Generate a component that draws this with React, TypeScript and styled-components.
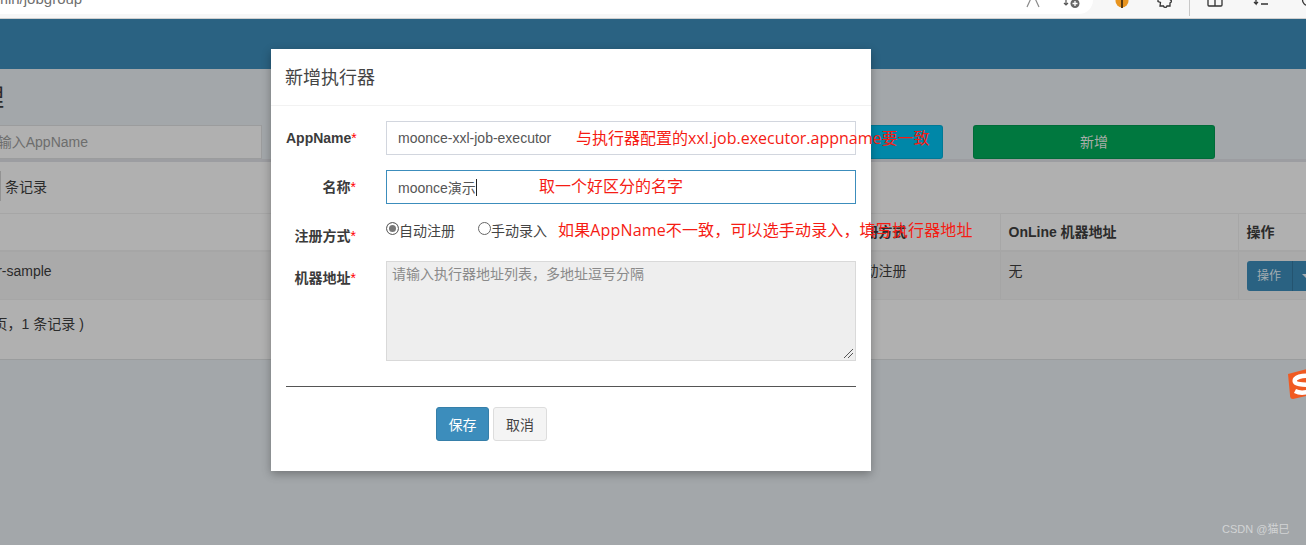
import styled, { createGlobalStyle } from "styled-components";

const GlobalStyle = createGlobalStyle`
  html, body {
    margin: 0;
    padding: 0;
    height: 100%;
    overflow: hidden;
    background: #a3a7aa;
  }
  * {
    box-sizing: border-box;
  }
  body {
    font-family: "Liberation Sans", "Noto Sans CJK SC", sans-serif;
    font-size: 14px;
    color: #2b2b2b;
  }
`;

const Page = styled.div`
  position: relative;
  width: 1306px;
  height: 545px;
  overflow: hidden;
  background: #a3a7aa;
`;

const BrowserBar = styled.div`
  display: flex;
  height: 19px;
  background: #f7f7f7;
  border-bottom: 1px solid #cfcfcf;
  overflow: hidden;
`;

const Omnibox = styled.div`
  display: flex;
  flex: none;
  justify-content: space-between;
  width: 1093px;
  height: 14px;
  padding-right: 12px;
  background: #fff;
  border-bottom-right-radius: 14px;
  overflow: hidden;
`;

const UrlText = styled.span`
  margin: -11px 0 0 -208px;
  font-size: 15px;
  line-height: 20px;
  color: #6f6f6f;
  white-space: nowrap;
`;

const OmniIcons = styled.div`
  display: flex;
  gap: 22px;
  margin-top: -9px;
`;

const ToolIcons = styled.div`
  display: flex;
  flex: none;
  align-items: flex-start;
  margin-top: -9px;
  padding-left: 22px;
  gap: 28px;
`;

const ToolSeparator = styled.i`
  display: block;
  width: 1px;
  height: 16px;
  margin: 9px -12px 0 -12px;
  background: #c8c8c8;
`;

const TopHeader = styled.header`
  height: 50px;
  background: #2a6282;
`;

const Content = styled.main`
  display: flex;
  flex-direction: column;
`;

const PageTitle = styled.h1`
  margin: 17px 0 0 -116px;
  font-size: 24px;
  line-height: 24px;
  font-weight: 400;
  color: #2b2b2b;
  white-space: nowrap;
`;

const FilterRow = styled.div`
  display: flex;
  height: 34px;
  margin: 15px 0 0 -80px;
`;

const SearchInput = styled.div`
  flex: none;
  width: 342px;
  height: 34px;
  padding: 0 173px 0 12px;
  background: #b0b0b0;
  border: 1px solid #9b9c9d;
  font-size: 14px;
  line-height: 32px;
  color: #6d6d6d;
  text-align: right;
  white-space: nowrap;
`;

const FilterButton = styled.div<{ $bg: string; $width: number; $left: number }>`
  flex: none;
  width: ${(p) => p.$width}px;
  height: 34px;
  margin-left: ${(p) => p.$left}px;
  background: ${(p) => p.$bg};
  border: 1px solid rgba(0, 0, 0, 0.1);
  border-radius: 3px;
  font-size: 14px;
  line-height: 32px;
  color: #a9ada9;
  text-align: center;
`;

const ListBox = styled.section`
  height: 201px;
  background: #b0b0b0;
  border-top: 3px solid #9c9da1;
  border-bottom: 1px solid #9a9c9d;
`;

const LengthRow = styled.div`
  display: flex;
  align-items: center;
  height: 51px;
  padding-bottom: 3px;
`;

const LengthSelect = styled.i`
  display: block;
  width: 1px;
  height: 30px;
  margin-right: 4px;
  background: #939393;
`;

const RecordsTable = styled.table`
  width: 1411px;
  margin-left: -105px;
  table-layout: fixed;
  border-collapse: collapse;
  font-size: 14px;
  line-height: 20px;
  color: #2b2b2b;
`;

const HeadCell = styled.th`
  height: 37px;
  padding: 0 8px;
  text-align: left;
  font-weight: 700;
  white-space: nowrap;
  vertical-align: middle;
  border-top: 1px solid #a6a6a6;
  border-right: 1px solid #a7a7a7;
  border-bottom: 2px solid #a6a6a6;
`;

const BodyCell = styled.td`
  height: 49px;
  padding: 9px 8px 0;
  vertical-align: top;
  white-space: nowrap;
  background: #aaaaaa;
  border-right: 1px solid #a5a5a5;
  border-bottom: 1px solid #a6a6a6;
`;

const ActionCell = styled(BodyCell)`
  padding: 9px 0 0 8px;
`;

const ActionGroup = styled.div`
  display: flex;
  width: 80px;
  height: 30px;
  background: #2a6282;
  border-radius: 3px;
  font-size: 12px;
  line-height: 30px;
  color: #a4acb1;
`;

const ActionLabel = styled.span`
  width: 46px;
  text-align: center;
  border-right: 1px solid #245470;
`;

const Caret = styled.i`
  display: block;
  width: 0;
  height: 0;
  margin: 13px 0 0 9px;
  border-top: 4px solid #a4acb1;
  border-left: 4px solid transparent;
  border-right: 4px solid transparent;
`;

const PageInfo = styled.div`
  margin: 14px 0 0 -106px;
  line-height: 20px;
  white-space: nowrap;
`;

const Modal = styled.div`
  position: absolute;
  left: 271px;
  top: 49px;
  width: 600px;
  height: 422px;
  background: #fff;
  box-shadow: 0 3px 9px rgba(0, 0, 0, 0.3);
  color: #333;
`;

const ModalHeader = styled.div`
  height: 57px;
  padding: 16px 14px;
  border-bottom: 1px solid #f2f2f2;
  font-size: 18px;
  line-height: 26px;
  color: #444;
`;

const ModalForm = styled.form`
  display: flex;
  flex-direction: column;
  padding: 15px 15px 0;
`;

const FieldRow = styled.div<{ $height: number }>`
  display: grid;
  grid-template-columns: 70px 470px;
  column-gap: 30px;
  height: ${(p) => p.$height}px;
`;

const FieldLabel = styled.label`
  padding-top: 7px;
  font-weight: 700;
  font-size: 14px;
  line-height: 20px;
  color: #3b3b3b;
  text-align: right;
  white-space: nowrap;
`;

const Required = styled.span`
  color: #f00;
  font-weight: 400;
`;

const TextField = styled.div<{ $focused?: boolean }>`
  display: flex;
  align-items: center;
  height: 34px;
  padding: 0 11px;
  border: 1px solid ${(p) => (p.$focused ? "#3c8dbc" : "#d2d6de")};
  font-size: 14px;
  color: #555;
`;

const TextCaret = styled.i`
  display: block;
  width: 1px;
  height: 17px;
  background: #222;
`;

const RadioGroup = styled.div`
  display: flex;
  padding-top: 2px;
  font-size: 14px;
  line-height: 20px;
  color: #444;
`;

const RadioOption = styled.span<{ $width: number }>`
  display: flex;
  align-items: flex-start;
  width: ${(p) => p.$width}px;
`;

const RadioMark = styled.i<{ $checked?: boolean }>`
  display: block;
  flex: none;
  width: 13px;
  height: 13px;
  margin-top: 1px;
  border: 1px solid #666;
  border-radius: 50%;
  background: ${(p) => (p.$checked ? "#777" : "#fff")};
  box-shadow: inset 0 0 0 ${(p) => (p.$checked ? "2px" : "0")} #fff;
`;

const TextArea = styled.div`
  position: relative;
  height: 100px;
  padding: 5px;
  background: #eee;
  border: 1px solid #d9d9d9;
  font-size: 14px;
  line-height: 14px;
  color: #8a8a8a;
`;

const ResizeGrip = styled.svg`
  position: absolute;
  right: 1px;
  bottom: 1px;
`;

const Divider = styled.hr`
  width: 570px;
  height: 1px;
  margin: 25px 0 20px;
  border: 0;
  background: #555;
`;

const ButtonRow = styled.div`
  display: flex;
  gap: 4px;
  padding-left: 150px;
`;

const ModalButton = styled.button<{ $primary?: boolean }>`
  width: ${(p) => (p.$primary ? 53 : 54)}px;
  height: 34px;
  padding: 0;
  background: ${(p) => (p.$primary ? "#3c8dbc" : "#f4f4f4")};
  border: 1px solid ${(p) => (p.$primary ? "#367fa9" : "#ddd")};
  border-radius: 3px;
  font-family: inherit;
  font-size: 14px;
  color: ${(p) => (p.$primary ? "#fff" : "#444")};
`;

const Annotation = styled.span<{ $left: number; $top: number; $tracking?: number }>`
  position: absolute;
  left: ${(p) => p.$left}px;
  top: ${(p) => p.$top}px;
  font-family: "Open Sans", "Noto Sans CJK SC", sans-serif;
  font-size: 16px;
  line-height: 20px;
  letter-spacing: ${(p) => p.$tracking ?? 0}px;
  color: #f51c14;
  white-space: nowrap;
`;

const ImeBadge = styled.svg`
  position: absolute;
  left: 1286px;
  top: 368px;
`;

const Watermark = styled.span`
  position: absolute;
  left: 1222px;
  top: 522px;
  font-size: 11px;
  line-height: 14px;
  color: #d2d4d5;
  white-space: nowrap;
`;

const iconStroke = { fill: "none", stroke: "#333", strokeWidth: 1.3 };

function ReadAloudIcon() {
  return (
    <svg width="16" height="18" viewBox="0 0 16 18">
      <path d="M2 16 L8 3 L14 16" fill="none" stroke="#8a8a8a" strokeWidth="1.2" />
    </svg>
  );
}

function FavoriteIcon() {
  return (
    <svg width="18" height="18" viewBox="0 0 18 18">
      <path d="M3 6v8M1 12l2 2 2-2" fill="none" stroke="#555" strokeWidth="1.2" />
      <circle cx="12" cy="12.500" r="4.500" fill="#666" />
      <path d="M12 10v5M9.500 12.500h5" stroke="#fff" strokeWidth="1.3" />
    </svg>
  );
}

function ExtensionBadge() {
  return (
    <svg width="14" height="18" viewBox="0 0 14 18">
      <circle cx="7" cy="10" r="6.500" fill="#e8941f" />
      <path d="M7 9v8" stroke="#5a3a10" strokeWidth="2" />
    </svg>
  );
}

function PuzzleIcon() {
  return (
    <svg width="16" height="18" viewBox="0 0 16 18">
      <path d="M1 9v1.500l2.500 1L3 15h3.500a1.800 1.800 0 0 0 3.500 0h3v-3a1.800 1.800 0 0 0 0-3.500V6" {...iconStroke} />
    </svg>
  );
}

function SplitIcon() {
  return (
    <svg width="18" height="18" viewBox="0 0 18 18">
      <path d="M2 4v10c0 .600.400 1 1 1h12c.600 0 1-.400 1-1V4M9 4v11" {...iconStroke} />
    </svg>
  );
}

function QueueIcon() {
  return (
    <svg width="18" height="18" viewBox="0 0 18 18">
      <path d="M4 4v9l-2-2M4 13l2-2M9 13h7" {...iconStroke} />
    </svg>
  );
}

function CollectionIcon() {
  return (
    <svg width="18" height="18" viewBox="0 0 18 18">
      <circle cx="10" cy="9" r="5.500" {...iconStroke} />
      <path d="M10 7v4M8 9h4" {...iconStroke} />
    </svg>
  );
}

function SogouBadge() {
  return (
    <ImeBadge width="24" height="32" viewBox="0 0 24 32">
      <path d="M2 6 L21 1 Q25 1 25 3 L25 27 L7 31 Q4.500 31 4.200 29 Z" fill="#f05a22" />
      <path
        d="M24 8 C17 7 7 9 9 14 C11 18 20 15 24 18 M24 23 C19 25 13 25 9 23"
        fill="none"
        stroke="#fff"
        strokeWidth="4.500"
      />
    </ImeBadge>
  );
}

export default function App() {
  return (
    <Page>
      <GlobalStyle />
      <BrowserBar>
        <Omnibox>
          <UrlText>http://localhost:8080/xxl-job-admin/jobgroup</UrlText>
          <OmniIcons>
            <ReadAloudIcon />
            <FavoriteIcon />
          </OmniIcons>
        </Omnibox>
        <ToolIcons>
          <ExtensionBadge />
          <PuzzleIcon />
          <ToolSeparator />
          <SplitIcon />
          <QueueIcon />
          <CollectionIcon />
        </ToolIcons>
      </BrowserBar>
      <TopHeader />
      <Content>
        <PageTitle>执行器管理</PageTitle>
        <FilterRow>
          <SearchInput>请输入AppName</SearchInput>
          <FilterButton $bg="#0087a8" $width={100} $left={581} />
          <FilterButton $bg="#00783f" $width={242} $left={30}>
            新增
          </FilterButton>
        </FilterRow>
        <ListBox>
          <LengthRow>
            <LengthSelect />
            条记录
          </LengthRow>
          <RecordsTable>
            <colgroup>
              <col width="485" />
              <col width="462" />
              <col width="158" />
              <col width="238" />
              <col width="68" />
            </colgroup>
            <thead>
              <tr>
                <HeadCell>AppName</HeadCell>
                <HeadCell>名称</HeadCell>
                <HeadCell>注册方式</HeadCell>
                <HeadCell>OnLine 机器地址</HeadCell>
                <HeadCell>操作</HeadCell>
              </tr>
            </thead>
            <tbody>
              <tr>
                <BodyCell>xxl-job-executor-sample</BodyCell>
                <BodyCell>示例执行器</BodyCell>
                <BodyCell>自动注册</BodyCell>
                <BodyCell>无</BodyCell>
                <ActionCell>
                  <ActionGroup>
                    <ActionLabel>操作</ActionLabel>
                    <Caret />
                  </ActionGroup>
                </ActionCell>
              </tr>
            </tbody>
          </RecordsTable>
          <PageInfo>第 1 页 ( 总共 1 页，1 条记录 )</PageInfo>
        </ListBox>
      </Content>

      <Modal>
        <ModalHeader>新增执行器</ModalHeader>
        <ModalForm>
          <FieldRow $height={49}>
            <FieldLabel>
              AppName<Required>*</Required>
            </FieldLabel>
            <TextField>moonce-xxl-job-executor</TextField>
          </FieldRow>
          <FieldRow $height={49}>
            <FieldLabel>
              名称<Required>*</Required>
            </FieldLabel>
            <TextField $focused>
              moonce演示
              <TextCaret />
            </TextField>
          </FieldRow>
          <FieldRow $height={42}>
            <FieldLabel>
              注册方式<Required>*</Required>
            </FieldLabel>
            <RadioGroup>
              <RadioOption $width={92}>
                <RadioMark $checked />
                自动注册
              </RadioOption>
              <RadioOption $width={80}>
                <RadioMark />
                手动录入
              </RadioOption>
            </RadioGroup>
          </FieldRow>
          <FieldRow $height={100}>
            <FieldLabel>
              机器地址<Required>*</Required>
            </FieldLabel>
            <TextArea>
              请输入执行器地址列表，多地址逗号分隔
              <ResizeGrip width="11" height="11" viewBox="0 0 11 11">
                <path d="M1 10 L10 1 M5 10 L10 5" stroke="#555" strokeWidth="1" />
              </ResizeGrip>
            </TextArea>
          </FieldRow>
          <Divider />
          <ButtonRow>
            <ModalButton $primary type="button">
              保存
            </ModalButton>
            <ModalButton type="button">取消</ModalButton>
          </ButtonRow>
        </ModalForm>
        <Annotation $left={305} $top={79}>
          与执行器配置的xxl.job.executor.appname要一致
        </Annotation>
        <Annotation $left={268} $top={127}>
          取一个好区分的名字
        </Annotation>
        <Annotation $left={287} $top={171} $tracking={0.15}>
          如果AppName不一致，可以选手动录入，填写执行器地址
        </Annotation>
      </Modal>

      <SogouBadge />
      <Watermark>CSDN @猫巳</Watermark>
    </Page>
  );
}
